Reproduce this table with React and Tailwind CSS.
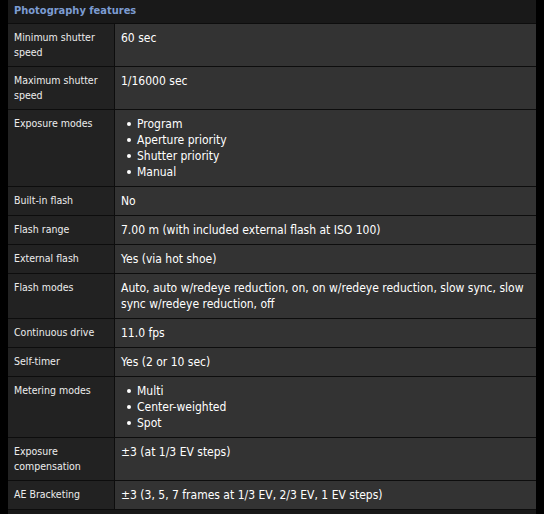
import React from "react";

const rows = [
  { label: "Minimum shutter speed", value: "60 sec" },
  { label: "Maximum shutter speed", value: "1/16000 sec" },
  {
    label: "Exposure modes",
    list: ["Program", "Aperture priority", "Shutter priority", "Manual"],
  },
  { label: "Built-in flash", value: "No" },
  { label: "Flash range", value: "7.00 m (with included external flash at ISO 100)" },
  { label: "External flash", value: "Yes (via hot shoe)" },
  {
    label: "Flash modes",
    value:
      "Auto, auto w/redeye reduction, on, on w/redeye reduction, slow sync, slow sync w/redeye reduction, off",
  },
  { label: "Continuous drive", value: "11.0 fps" },
  { label: "Self-timer", value: "Yes (2 or 10 sec)" },
  { label: "Metering modes", list: ["Multi", "Center-weighted", "Spot"] },
  { label: "Exposure compensation", value: "±3 (at 1/3 EV steps)" },
  { label: "AE Bracketing", value: "±3 (3, 5, 7 frames at 1/3 EV, 2/3 EV, 1 EV steps)" },
];

const Row = ({ item }) => {
  return (
    <div className="flex border-b border-[#0d0d0d]">
      <div className="w-[107px] shrink-0 bg-[#222222] border-r border-[#0d0d0d] pl-[6px] pr-2 py-[6px] text-[10.5px] leading-[15px] text-[#ededed]">
        {item.label}
      </div>
      <div className="flex-1 bg-[#333333] pl-[6px] pr-[8px] py-[6px] text-[12px] leading-[16px] text-white">
        {item.list ? (
          <ul className="pl-[6px]">
            {item.list.map((li) => (
              <li key={li} className="flex items-center gap-[6px]">
                <span className="w-[4px] h-[4px] rounded-full bg-white shrink-0"></span>
                {li}
              </li>
            ))}
          </ul>
        ) : (
          item.value
        )}
      </div>
    </div>
  );
};

const App = () => {
  return (
    <div
      className="w-[544px] h-[514px] overflow-hidden bg-black pl-[8px] text-[11px]"
      style={{ fontFamily: '"DejaVu Sans Condensed", "DejaVu Sans", sans-serif' }}
    >
      <div className="w-[528px]">
        <div className="h-[24px] bg-[#191919] border-b border-[#0d0d0d] pl-[6px] pt-[3px] font-bold text-[#7c9cd2] leading-[15px]">
          Photography features
        </div>
        {rows.map((item) => (
          <Row key={item.label} item={item} />
        ))}
        <div className="h-[20px] bg-[#191919]"></div>
      </div>
    </div>
  );
};

export default App;
